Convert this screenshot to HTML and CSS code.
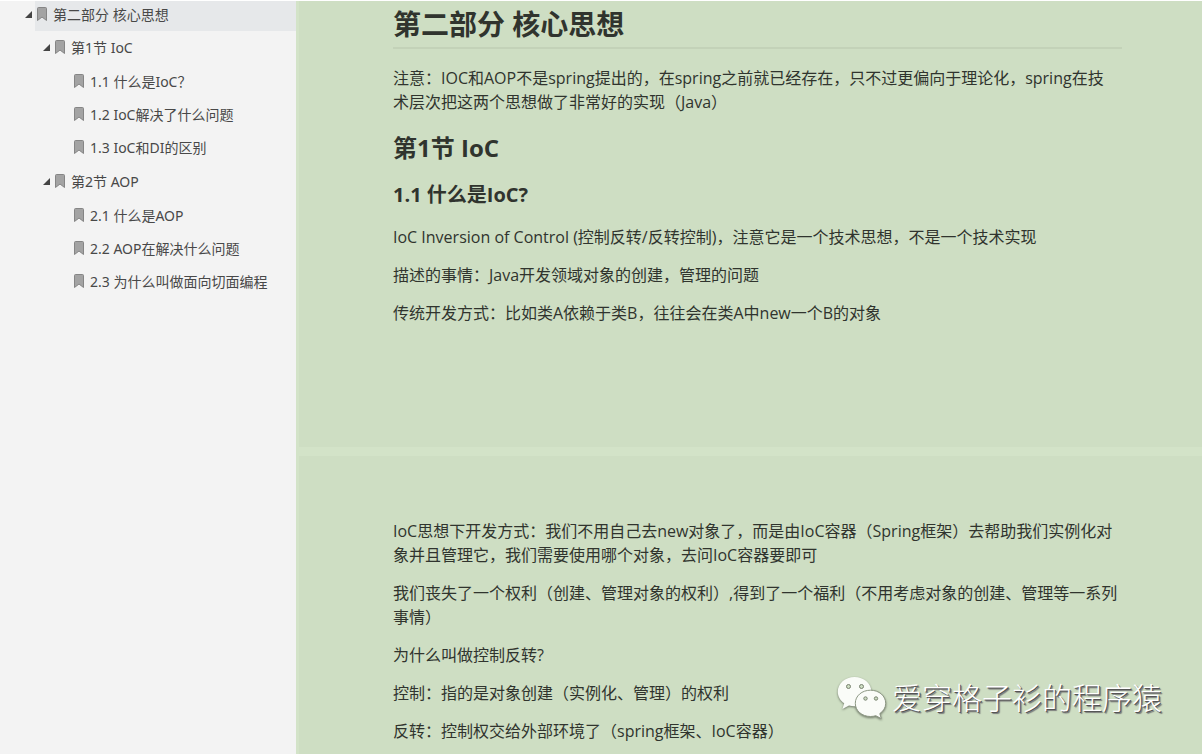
FILE: index.html
```
<!DOCTYPE html>
<html lang="zh-CN">
<head>
    <meta charset="UTF-8">
    <meta name="viewport" content="width=device-width, initial-scale=1.0">
    <title>第二部分 核心思想</title>
    <link rel="stylesheet" href="styles.css">
</head>
<body>
    <svg class="defs" aria-hidden="true">
        <symbol id="bookmark" viewBox="0 0 10 14">
            <path d="M1.5 .5h7q1 0 1 1v12L5 10 .5 13.5v-12q0-1 1-1z" fill="#a3a3a3" stroke="#858585"/>
        </symbol>
        <symbol id="caret" viewBox="0 0 7 7">
            <path d="M7 0v7H0z" fill="#444"/>
        </symbol>
    </svg>

    <div class="reader">
        <nav class="outline">
            <ul>
                <li>
                    <div class="row">
                        <button class="toggle" aria-label="折叠"><svg><use href="#caret"/></svg></button>
                        <a class="active" href="#part2"><svg><use href="#bookmark"/></svg>第二部分 核心思想</a>
                    </div>
                    <ul>
                        <li>
                            <div class="row">
                                <button class="toggle" aria-label="折叠"><svg><use href="#caret"/></svg></button>
                                <a href="#ioc"><svg><use href="#bookmark"/></svg>第1节 IoC</a>
                            </div>
                            <ul class="leaves">
                                <li class="row"><a href="#ioc-what"><svg><use href="#bookmark"/></svg>1.1 什么是IoC？</a></li>
                                <li class="row"><a href="#ioc-solve"><svg><use href="#bookmark"/></svg>1.2 IoC解决了什么问题</a></li>
                                <li class="row"><a href="#ioc-di"><svg><use href="#bookmark"/></svg>1.3 IoC和DI的区别</a></li>
                            </ul>
                        </li>
                        <li>
                            <div class="row">
                                <button class="toggle" aria-label="折叠"><svg><use href="#caret"/></svg></button>
                                <a href="#aop"><svg><use href="#bookmark"/></svg>第2节 AOP</a>
                            </div>
                            <ul class="leaves">
                                <li class="row"><a href="#aop-what"><svg><use href="#bookmark"/></svg>2.1 什么是AOP</a></li>
                                <li class="row"><a href="#aop-solve"><svg><use href="#bookmark"/></svg>2.2 AOP在解决什么问题</a></li>
                                <li class="row"><a href="#aop-why"><svg><use href="#bookmark"/></svg>2.3 为什么叫做面向切面编程</a></li>
                            </ul>
                        </li>
                    </ul>
                </li>
            </ul>
        </nav>

        <main class="pages">
            <section class="page first">
                <h1 id="part2">第二部分 核心思想</h1>
                <p>注意：IOC和AOP不是spring提出的，在spring之前就已经存在，只不过更偏向于理论化，spring在技<br>术层次把这两个思想做了非常好的实现（Java）</p>
                <h2 id="ioc">第1节 IoC</h2>
                <h3 id="ioc-what">1.1 什么是IoC?</h3>
                <p>IoC Inversion of Control (控制反转/反转控制)，注意它是一个技术思想，不是一个技术实现</p>
                <p>描述的事情：Java开发领域对象的创建，管理的问题</p>
                <p>传统开发方式：比如类A依赖于类B，往往会在类A中new一个B的对象</p>
            </section>
            <section class="page">
                <p>IoC思想下开发方式：我们不用自己去new对象了，而是由IoC容器（Spring框架）去帮助我们实例化对<br>象并且管理它，我们需要使用哪个对象，去问IoC容器要即可</p>
                <p>我们丧失了一个权利（创建、管理对象的权利）,得到了一个福利（不用考虑对象的创建、管理等一系列<br>事情）</p>
                <p>为什么叫做控制反转?</p>
                <p>控制：指的是对象创建（实例化、管理）的权利</p>
                <p>反转：控制权交给外部环境了（spring框架、IoC容器）</p>
            </section>
        </main>

        <div class="watermark">
            <svg viewBox="0 0 50 44" aria-hidden="true">
                <g fill="#fafcf8">
                    <path d="M17.5 1C8 1 .8 7.500 .8 15.700c0 4.800 2.500 8.800 6.400 11.500L5.400 33l6.600-3.600c1.800.5 3.600.8 5.500.8 9.500 0 16.900-6.500 16.900-14.500S27 1 17.500 1z"/>
                    <path class="bubble" d="M33.500 14.200c-8.600 0-15.200 5.700-15.200 13.100s6.600 13.200 15.200 13.200c1.900 0 3.700-.3 5.300-.8l5.500 2.900-1.500-5c3.600-2.400 5.900-6 5.900-10.300 0-7.400-6.700-13.100-15.200-13.100z"/>
                </g>
                <g class="eyes">
                    <circle cx="11.500" cy="10.500" r="2"/>
                    <circle cx="24.500" cy="10.500" r="2"/>
                    <circle cx="28.500" cy="22.500" r="1.700"/>
                    <circle cx="39" cy="22.500" r="1.700"/>
                </g>
            </svg>
            <span>爱穿格子衫的程序猿</span>
        </div>
    </div>
</body>
</html>
```
FILE: styles.css
```
* {
    box-sizing: border-box;
}

body {
    margin: 0;
    font-family: "Open Sans", "Noto Sans CJK SC", sans-serif;
    color: #30342e;
}

.defs {
    position: absolute;
    width: 0;
    height: 0;
}

.reader {
    position: relative;
    display: flex;
    height: 100vh;
    border-top: 1px solid #fff;
    overflow: hidden;
}

/* outline tree */
.outline {
    flex: 0 0 296px;
    background-color: #f3f3f3;
    font-family: "Noto Sans", "Noto Sans CJK SC", sans-serif;
    font-size: 14px;
}

.outline ul {
    list-style: none;
    margin: 0;
    padding: 0 0 0 18px;
}

.outline .row {
    display: flex;
    align-items: flex-start;
    height: 33px;
}

.outline .leaves {
    padding: 1px 0 1px 36px;
}

.outline a {
    display: flex;
    flex: 1;
    align-items: center;
    gap: 6px;
    height: 30px;
    padding: 0 0 4px 2px;
    color: #484848;
    text-decoration: none;
    white-space: nowrap;
}

.outline a.active {
    background-color: #e6e8ea;
}

.outline a svg {
    width: 10px;
    height: 14px;
}

.toggle {
    display: flex;
    align-items: center;
    justify-content: flex-end;
    width: 17px;
    height: 30px;
    padding: 0 3px 4px 0;
    border: 0;
    background: none;
    cursor: pointer;
}

.toggle svg {
    width: 7px;
    height: 7px;
}

/* document */
.pages {
    flex: 1;
    min-width: 0;
    padding-left: 3px;
    background-color: #d3e3c8;
    overflow: hidden;
}

.page {
    padding: 63px 80px 60px 94px;
    background-color: #cedec3;
}

.page.first {
    min-height: 446px;
    margin-bottom: 9px;
    padding-top: 3px;
}

h1, h2, h3 {
    margin: 0;
    font-weight: bold;
}

h1 {
    margin-bottom: 17px;
    padding-bottom: 3px;
    border-bottom: 2px solid #c3d2b8;
    font-size: 28px;
    line-height: 40px;
}

h2 {
    margin-top: 16px;
    margin-bottom: 14px;
    font-size: 24px;
    line-height: 36px;
}

h3 {
    margin-bottom: 15px;
    font-size: 20px;
    line-height: 30px;
}

p {
    margin: 0 0 14px;
    font-size: 16px;
    line-height: 24px;
}

.watermark {
    position: absolute;
    right: 40px;
    bottom: 34px;
    display: flex;
    align-items: center;
    gap: 5px;
    color: #fff;
    font-size: 30px;
    font-weight: 300;
    line-height: 44px;
    text-shadow: 1px 1px 0 #555, 2px 2px 1px #777;
}

.watermark svg {
    width: 50px;
    height: 44px;
    filter: drop-shadow(0 1px 1px #6c7565);
}

.bubble {
    stroke: #8d9884;
    stroke-width: 1;
}

.eyes {
    fill: #cedec3;
    stroke: #78826f;
    stroke-width: 1;
}
```
